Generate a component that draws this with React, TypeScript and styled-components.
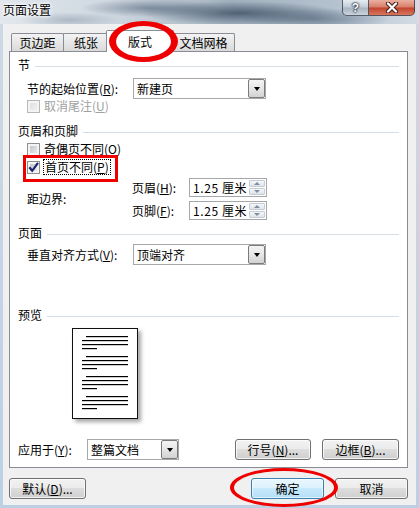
import styled, { createGlobalStyle, css } from 'styled-components';

const FONT = '"Noto Sans CJK SC", "Noto Sans", "Liberation Sans", sans-serif';

const GlobalStyle = createGlobalStyle`
    html, body {
        margin: 0;
        padding: 0;
        background: #fff;
    }
    body {
        font-family: ${FONT};
        font-size: 12px;
        color: #000;
    }
    u {
        text-decoration: underline;
        text-underline-offset: 1px;
    }
`;

const Window = styled.div`
    position: relative;
    width: 419px;
    height: 508px;
    overflow: hidden;
    display: flex;
    flex-direction: column;
    background: linear-gradient(180deg, #cdd9e5 0%, #bcd0e4 100%);
`;

const TitleBar = styled.div`
    height: 24px;
    flex: none;
    display: flex;
    align-items: flex-start;
    background:
        radial-gradient(ellipse 100px 12px at 240px 13px, rgba(50, 70, 92, 0.75), transparent),
        radial-gradient(ellipse 70px 9px at 150px 8px, rgba(70, 90, 112, 0.55), transparent),
        radial-gradient(ellipse 75px 11px at 315px 19px, rgba(75, 95, 118, 0.6), transparent),
        radial-gradient(ellipse 50px 8px at 70px 20px, rgba(110, 130, 150, 0.4), transparent),
        linear-gradient(90deg, #e1e7ed 0%, #cdd6df 28%, #a3b1bf 55%, #b4c1ce 80%, #d3dce5 100%);
`;

const Title = styled.span`
    margin: 3px 0 0 3px;
    font-size: 12px;
    line-height: 14px;
    text-shadow: 0 0 5px #fff, 0 0 3px #fff, 0 0 2px #fff;
`;

const Controls = styled.div`
    margin-left: auto;
    margin-right: 4px;
    display: flex;
    height: 16px;
`;

const CtrlButton = styled.div<{ $close?: boolean }>`
    width: 27px;
    height: 16px;
    box-sizing: border-box;
    border: 1px solid rgba(40, 50, 65, 0.75);
    border-top: none;
    border-radius: 0 0 0 5px;
    display: flex;
    align-items: center;
    justify-content: center;
    background: linear-gradient(#e6ecf1 0%, #c2cdd7 48%, #a6b4c1 52%, #c9d4de 100%);
    color: #fff;
    font: bold 12px "Liberation Sans", sans-serif;
    text-shadow: 0 0 1px #223, 0 0 2px #223, 0 0 2px #223;
    ${({ $close }) =>
        $close &&
        css`
            width: 46px;
            border-left: none;
            border-radius: 0 0 5px 0;
            background: linear-gradient(#eab0a2 0%, #d77d68 48%, #c2432b 52%, #d8775e 100%);
        `}
`;

const Client = styled.div`
    flex: 1;
    margin: 0 3px 3px 3px;
    background: #f0f0f0;
    padding: 6px 8px 0 6px;
    display: flex;
    flex-direction: column;
`;

const TabStrip = styled.div`
    height: 21px;
    display: flex;
    align-items: flex-end;
    padding-left: 2px;
`;

const Tab = styled.div<{ $w: number; $active?: boolean }>`
    position: relative;
    width: ${({ $w }) => $w}px;
    height: 18px;
    box-sizing: border-box;
    margin-right: -1px;
    border: 1px solid #898c95;
    border-bottom: none;
    border-radius: 2px 2px 0 0;
    background: linear-gradient(#f3f3f3, #dadada);
    display: flex;
    align-items: center;
    justify-content: center;
    line-height: 14px;
    ${({ $active }) =>
        $active &&
        css`
            z-index: 1;
            height: 22px;
            margin: 0 -2px -1px -2px;
            background: #fff;
        `}
`;

const Panel = styled.div`
    height: 417px;
    box-sizing: border-box;
    border: 1px solid #898c95;
    background: #fff;
    padding: 6px 8px 0 8px;
    display: flex;
    flex-direction: column;
`;

const Heading = styled.div<{ $mt: number }>`
    margin-top: ${({ $mt }) => $mt}px;
    height: 14px;
    line-height: 14px;
    display: flex;
    align-items: center;
    gap: 5px;
    &::after {
        content: '';
        flex: 1;
        height: 1px;
        margin-top: 2px;
        background: #d5dfe5;
    }
`;

const FieldRow = styled.div<{ $mt: number }>`
    margin: ${({ $mt }) => $mt}px 0 0 9px;
    height: 21px;
    display: flex;
    align-items: center;
`;

const Label = styled.span<{ $w: number; $disabled?: boolean }>`
    width: ${({ $w }) => $w}px;
    flex: none;
    white-space: nowrap;
    line-height: 14px;
    color: ${({ $disabled }) => ($disabled ? '#a0a0a0' : '#000')};
`;

const Select = styled.div<{ $w: number }>`
    width: ${({ $w }) => $w}px;
    height: 21px;
    box-sizing: border-box;
    border: 1px solid #a5a7ab;
    background: #fff;
    display: flex;
    align-items: center;
    padding-left: 3px;
    line-height: 14px;
`;

const DropButton = styled.span`
    margin-left: auto;
    width: 17px;
    height: 19px;
    box-sizing: border-box;
    border: 1px solid #7b7b7b;
    border-radius: 2px;
    background: linear-gradient(#f4f4f4 0%, #e6e6e6 50%, #d2d2d2 100%);
    display: flex;
    align-items: center;
    justify-content: center;
    &::after {
        content: '';
        border-left: 3.5px solid transparent;
        border-right: 3.5px solid transparent;
        border-top: 4px solid #000;
    }
`;

const CheckRow = styled.div<{ $mt: number }>`
    position: relative;
    margin: ${({ $mt }) => $mt}px 0 0 9px;
    height: 14px;
    display: flex;
    align-items: center;
    gap: 4px;
    line-height: 14px;
`;

const Box = styled.span<{ $disabled?: boolean }>`
    width: 13px;
    height: 13px;
    flex: none;
    box-sizing: border-box;
    border: 1px solid #8f8f8f;
    background: linear-gradient(135deg, #b9bec4, #f2f2f2);
    box-shadow: inset 0 0 0 2px #f4f4f4;
    display: flex;
    align-items: center;
    justify-content: center;
    ${({ $disabled }) =>
        $disabled &&
        css`
            border-color: #b8b8b8;
            background: linear-gradient(135deg, #dcdcdc, #f4f4f4);
        `}
`;

const CheckText = styled.span<{ $disabled?: boolean; $focus?: boolean }>`
    color: ${({ $disabled }) => ($disabled ? '#a0a0a0' : '#000')};
    ${({ $focus }) =>
        $focus &&
        css`
            padding: 0 1px;
            outline: 1px dotted #000;
            outline-offset: 0;
        `}
`;

const RedBox = styled.div`
    position: absolute;
    left: -4px;
    top: -5px;
    width: 95px;
    height: 27px;
    box-sizing: border-box;
    border: 3px solid #ee0000;
`;

const DistanceBlock = styled.div`
    margin: 4px 0 0 9px;
    display: flex;
    align-items: center;
`;

const SpinColumn = styled.div`
    display: flex;
    flex-direction: column;
    gap: 4px;
`;

const SpinRow = styled.div`
    height: 19px;
    display: flex;
    align-items: center;
`;

const Spin = styled.div`
    width: 78px;
    height: 19px;
    box-sizing: border-box;
    border: 1px solid #a5a7ab;
    display: flex;
    align-items: center;
    padding-left: 3px;
    line-height: 14px;
    letter-spacing: 0.6px;
`;

const SpinButtons = styled.span`
    margin: 0 1px 0 auto;
    width: 16px;
    height: 15px;
    display: flex;
    flex-direction: column;
    gap: 1px;
`;

const SpinArrow = styled.span<{ $down?: boolean }>`
    flex: 1;
    box-sizing: border-box;
    border: 1px solid #c4ccd6;
    border-radius: 1px;
    background: linear-gradient(#f6f7f9, #dfe3e8);
    display: flex;
    align-items: center;
    justify-content: center;
    &::after {
        content: '';
        border-left: 3px solid transparent;
        border-right: 3px solid transparent;
        ${({ $down }) =>
            $down ? 'border-top: 3px solid #7d8ea3;' : 'border-bottom: 3px solid #7d8ea3;'}
    }
`;

const PreviewPage = styled.div`
    margin: 6px 0 0 54px;
    width: 66px;
    height: 91px;
    box-sizing: border-box;
    border: 1px solid #111;
    background: #fff;
    box-shadow: 3px 3px 4px rgba(0, 0, 0, 0.35);
    svg {
        display: block;
    }
`;

const PanelFooter = styled.div`
    margin-top: 20px;
    height: 21px;
    display: flex;
    align-items: center;
    gap: 11px;
`;

const Push = styled.span`
    margin-left: auto;
`;

const Button = styled.div<{ $w: number; $default?: boolean }>`
    width: ${({ $w }) => $w}px;
    height: 21px;
    flex: none;
    box-sizing: border-box;
    border: 1px solid #707070;
    border-radius: 3px;
    background: linear-gradient(#f2f2f2 0%, #ebebeb 47%, #dddddd 50%, #cfcfcf 100%);
    box-shadow: inset 0 0 0 1px rgba(255, 255, 255, 0.75);
    display: flex;
    align-items: center;
    justify-content: center;
    line-height: 14px;
    white-space: nowrap;
    ${({ $default }) =>
        $default &&
        css`
            border-color: #3c7fb1;
            background: linear-gradient(#eaf6fd 0%, #dcf1fc 47%, #c7e9fb 50%, #b4dff7 100%);
            box-shadow: inset 0 0 0 1px rgba(255, 255, 255, 0.6);
        `}
`;

const DialogFooter = styled.div`
    margin-top: 10px;
    display: flex;
    align-items: center;
    gap: 11px;
`;

const Ellipse = styled.div<{ $x: number; $y: number; $w: number; $h: number; $bw: string }>`
    position: absolute;
    left: ${({ $x }) => $x}px;
    top: ${({ $y }) => $y}px;
    width: ${({ $w }) => $w}px;
    height: ${({ $h }) => $h}px;
    box-sizing: border-box;
    border-style: solid;
    border-color: #ee0000;
    border-width: ${({ $bw }) => $bw};
    border-radius: 50%;
    pointer-events: none;
    z-index: 5;
`;

const paragraphs = [8, 28, 48, 68];

function PageLines() {
    return (
        <svg width="64" height="89" viewBox="0 0 64 89">
            {paragraphs.map((y) => (
                <g key={y} fill="#000">
                    <rect x="13" y={y - 1} width="42" height="1.2" />
                    <rect x="9" y={y + 3} width="46" height="1.2" />
                    <rect x="9" y={y + 7} width="46" height="1.2" />
                    <rect x="9" y={y + 11} width="15" height="1.2" />
                </g>
            ))}
        </svg>
    );
}

function CheckMark() {
    return (
        <svg width="11" height="11" viewBox="0 0 11 11">
            <path d="M1.3 5.3 L4.2 8.8 L10 0.8" fill="none" stroke="#1e2370" strokeWidth="2.2" />
        </svg>
    );
}

function CloseGlyph() {
    return (
        <svg width="14" height="11" viewBox="0 0 14 11">
            <path d="M3 1.5 L11 9.5 M11 1.5 L3 9.5" stroke="#3a1a14" strokeWidth="4.2" strokeLinecap="round" />
            <path d="M3 1.5 L11 9.5 M11 1.5 L3 9.5" stroke="#fff" strokeWidth="2.4" strokeLinecap="round" />
        </svg>
    );
}

export default function App() {
    return (
        <>
            <GlobalStyle />
            <Window>
                <TitleBar>
                    <Title>页面设置</Title>
                    <Controls>
                        <CtrlButton>?</CtrlButton>
                        <CtrlButton $close>
                            <CloseGlyph />
                        </CtrlButton>
                    </Controls>
                </TitleBar>
                <Client>
                    <TabStrip>
                        <Tab $w={53}>页边距</Tab>
                        <Tab $w={46}>纸张</Tab>
                        <Tab $w={68} $active>
                            版式
                        </Tab>
                        <Tab $w={63}>文档网格</Tab>
                    </TabStrip>
                    <Panel>
                        <Heading $mt={0}>节</Heading>
                        <FieldRow $mt={6}>
                            <Label $w={106}>
                                节的起始位置(<u>R</u>):
                            </Label>
                            <Select $w={133}>
                                新建页
                                <DropButton />
                            </Select>
                        </FieldRow>
                        <CheckRow $mt={0}>
                            <Box $disabled />
                            <CheckText $disabled>
                                取消尾注(<u>U</u>)
                            </CheckText>
                        </CheckRow>

                        <Heading $mt={11}>页眉和页脚</Heading>
                        <CheckRow $mt={4}>
                            <Box />
                            <CheckText>
                                奇偶页不同(<u>O</u>)
                            </CheckText>
                        </CheckRow>
                        <CheckRow $mt={4}>
                            <Box>
                                <CheckMark />
                            </Box>
                            <CheckText $focus>
                                首页不同(<u>P</u>)
                            </CheckText>
                            <RedBox />
                        </CheckRow>
                        <DistanceBlock>
                            <Label $w={105}>距边界:</Label>
                            <SpinColumn>
                                <SpinRow>
                                    <Label $w={57}>
                                        页眉(<u>H</u>):
                                    </Label>
                                    <Spin>
                                        1.25 厘米
                                        <SpinButtons>
                                            <SpinArrow />
                                            <SpinArrow $down />
                                        </SpinButtons>
                                    </Spin>
                                </SpinRow>
                                <SpinRow>
                                    <Label $w={57}>
                                        页脚(<u>F</u>):
                                    </Label>
                                    <Spin>
                                        1.25 厘米
                                        <SpinButtons>
                                            <SpinArrow />
                                            <SpinArrow $down />
                                        </SpinButtons>
                                    </Spin>
                                </SpinRow>
                            </SpinColumn>
                        </DistanceBlock>

                        <Heading $mt={6}>页面</Heading>
                        <FieldRow $mt={4}>
                            <Label $w={106}>
                                垂直对齐方式(<u>V</u>):
                            </Label>
                            <Select $w={133}>
                                顶端对齐
                                <DropButton />
                            </Select>
                        </FieldRow>

                        <Heading $mt={43}>预览</Heading>
                        <PreviewPage>
                            <PageLines />
                        </PreviewPage>

                        <PanelFooter>
                            <Label $w={58}>
                                应用于(<u>Y</u>):
                            </Label>
                            <Select $w={92}>
                                整篇文档
                                <DropButton />
                            </Select>
                            <Push />
                            <Button $w={76}>
                                行号(<u>N</u>)...
                            </Button>
                            <Button $w={77}>
                                边框(<u>B</u>)...
                            </Button>
                        </PanelFooter>
                    </Panel>
                    <DialogFooter>
                        <Button $w={77}>
                            默认(<u>D</u>)...
                        </Button>
                        <Push />
                        <Button $w={73} $default>
                            确定
                        </Button>
                        <Button $w={73}>取消</Button>
                    </DialogFooter>
                </Client>
                <Ellipse $x={109} $y={21} $w={69} $h={41} $bw="5px 7px" />
                <Ellipse $x={230} $y={468} $w={108} $h={39} $bw="3px 4px" />
            </Window>
        </>
    );
}
